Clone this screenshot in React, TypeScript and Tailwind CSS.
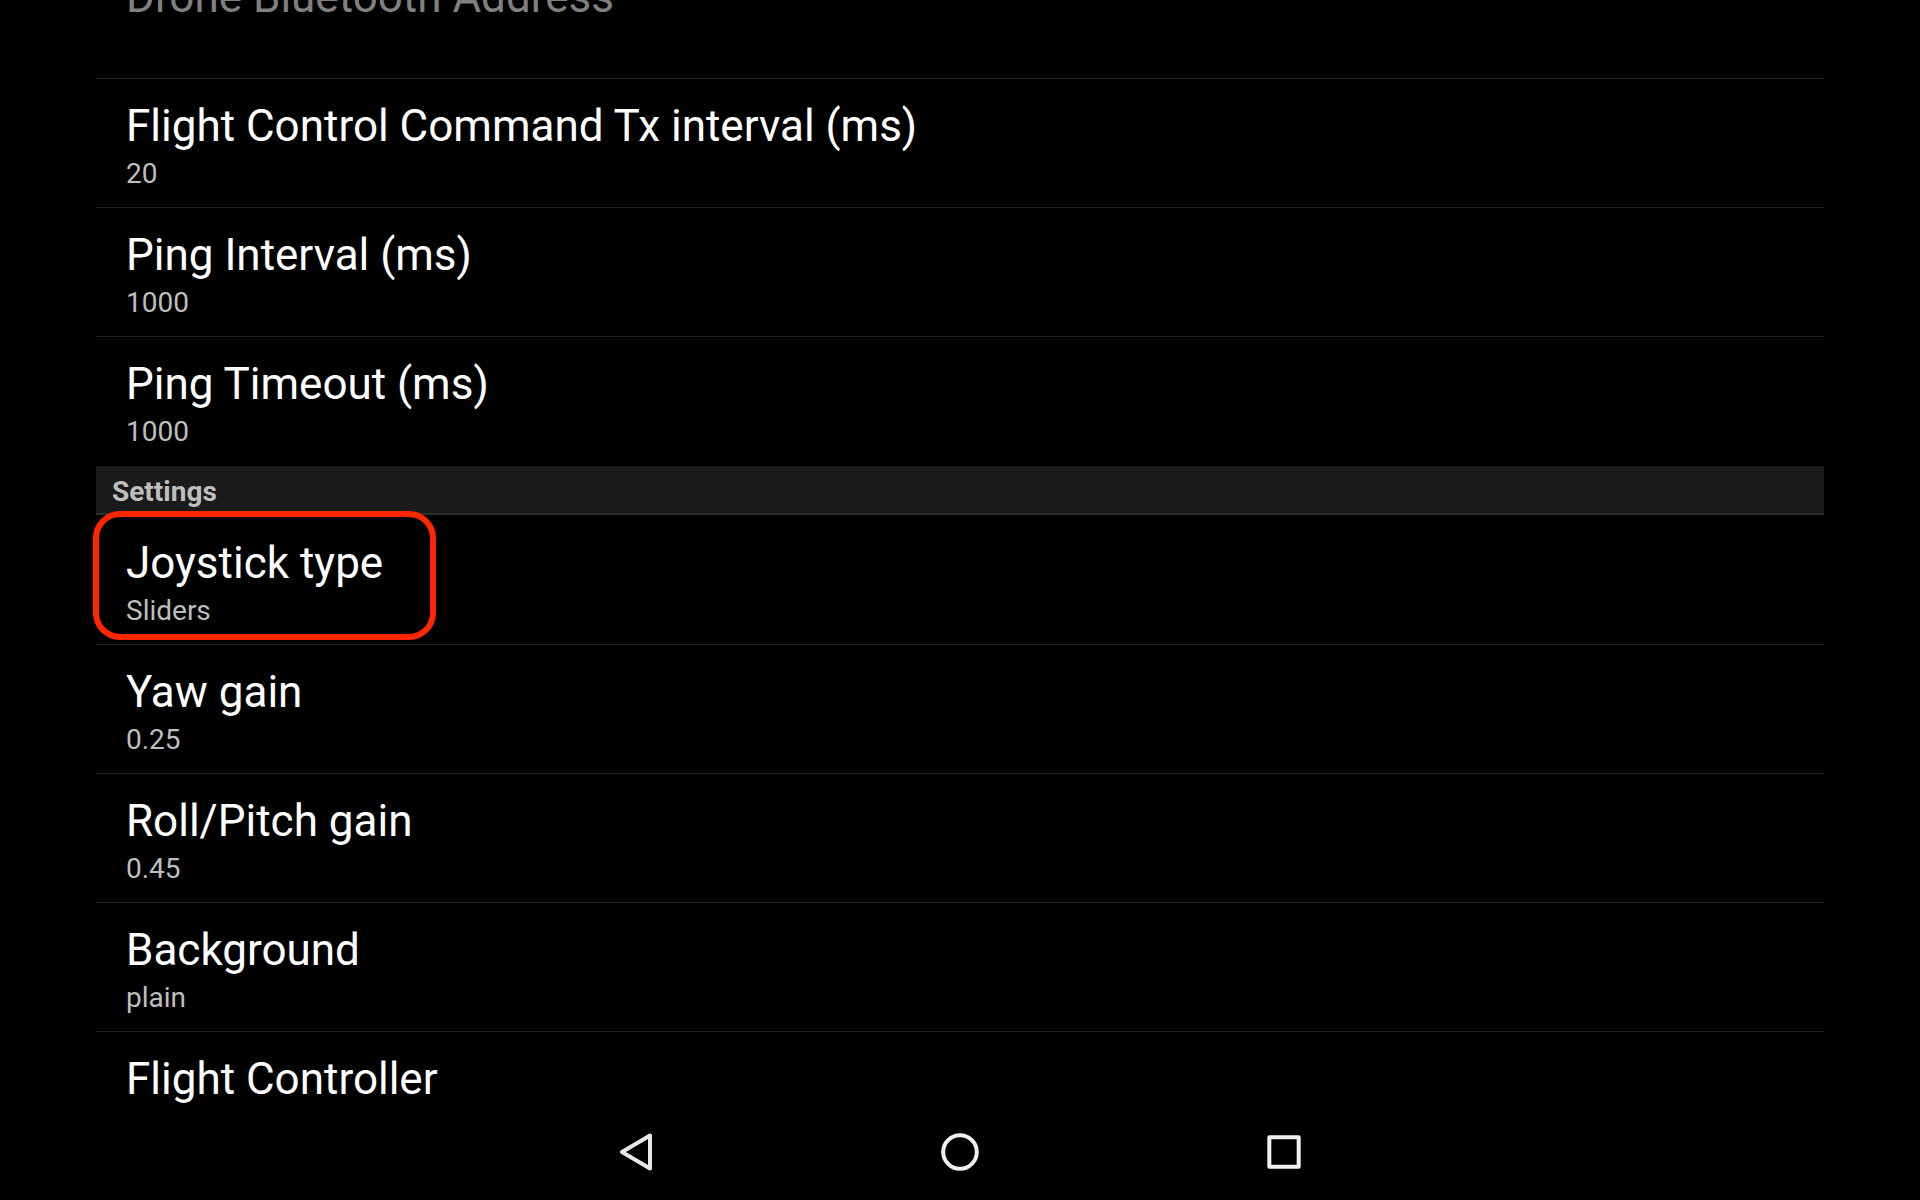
import React from "react";

type Preference = { title: string; summary: string };

const connection: Preference[] = [
  { title: "Flight Control Command Tx interval (ms)", summary: "20" },
  { title: "Ping Interval (ms)", summary: "1000" },
  { title: "Ping Timeout (ms)", summary: "1000" },
];

const settings: Preference[] = [
  { title: "Joystick type", summary: "Sliders" },
  { title: "Yaw gain", summary: "0.25" },
  { title: "Roll/Pitch gain", summary: "0.45" },
  { title: "Background", summary: "plain" },
  { title: "Flight Controller", summary: "" },
];

function Row({ item, highlighted, divided }: { item: Preference; highlighted?: boolean; divided?: boolean }) {
  return (
    <li className={divided ? "relative border-t border-[#212121]" : "relative pt-px"}>
      <button type="button" className="flex h-32 w-full flex-col px-[30px] pt-[21px] text-left">
        <span className="text-[44px] leading-[52px] text-white">{item.title}</span>
        <span className="text-[28px] leading-[44px] text-[#bebebe]">{item.summary}</span>
      </button>
      {highlighted && (
        <span className="pointer-events-none absolute -top-1 -left-[3px] h-[129px] w-[343px] rounded-[27px] border-[6px] border-[#ff2600]" />
      )}
    </li>
  );
}

export default function App() {
  return (
    <div className="flex h-screen flex-col bg-black font-['Roboto',sans-serif]">
      <main className="min-h-0 flex-1 overflow-hidden px-24">
        <div className="flex h-[78px] items-start px-[30px]">
          <span className="-mt-[29px] text-[44px] leading-[52px] text-[#808080]">Drone Bluetooth Address</span>
        </div>
        <ul className="pb-px">
          {connection.map((item) => (
            <Row key={item.title} item={item} divided />
          ))}
        </ul>
        <h2 className="h-[49px] border-b-2 border-[#2f2f2f] bg-[#1a1a1a] px-4 text-[28px] leading-[52px] font-bold text-[#bebebe]">
          Settings
        </h2>
        <ul>
          {settings.map((item, i) => (
            <Row key={item.title} item={item} highlighted={i === 0} divided={i > 0} />
          ))}
        </ul>
      </main>
      <nav className="flex h-24 shrink-0 items-center justify-center gap-[228px]">
        <button type="button" aria-label="Back" className="size-24">
          <svg viewBox="0 0 96 96" className="size-24" fill="none" stroke="#e8e8e8" strokeWidth="4" strokeLinejoin="round">
            <path d="M62 31.5V64.5L34 48Z" />
          </svg>
        </button>
        <button type="button" aria-label="Home" className="size-24">
          <svg viewBox="0 0 96 96" className="size-24" fill="none" stroke="#f0f0f0" strokeWidth="4">
            <circle cx="48" cy="48" r="16.8" />
          </svg>
        </button>
        <button type="button" aria-label="Recent apps" className="size-24">
          <svg viewBox="0 0 96 96" className="size-24" fill="none" stroke="#f0f0f0" strokeWidth="4" strokeLinejoin="round">
            <path d="M33.3 33.3H62.7V62.7H33.3Z" />
          </svg>
        </button>
      </nav>
    </div>
  );
}
